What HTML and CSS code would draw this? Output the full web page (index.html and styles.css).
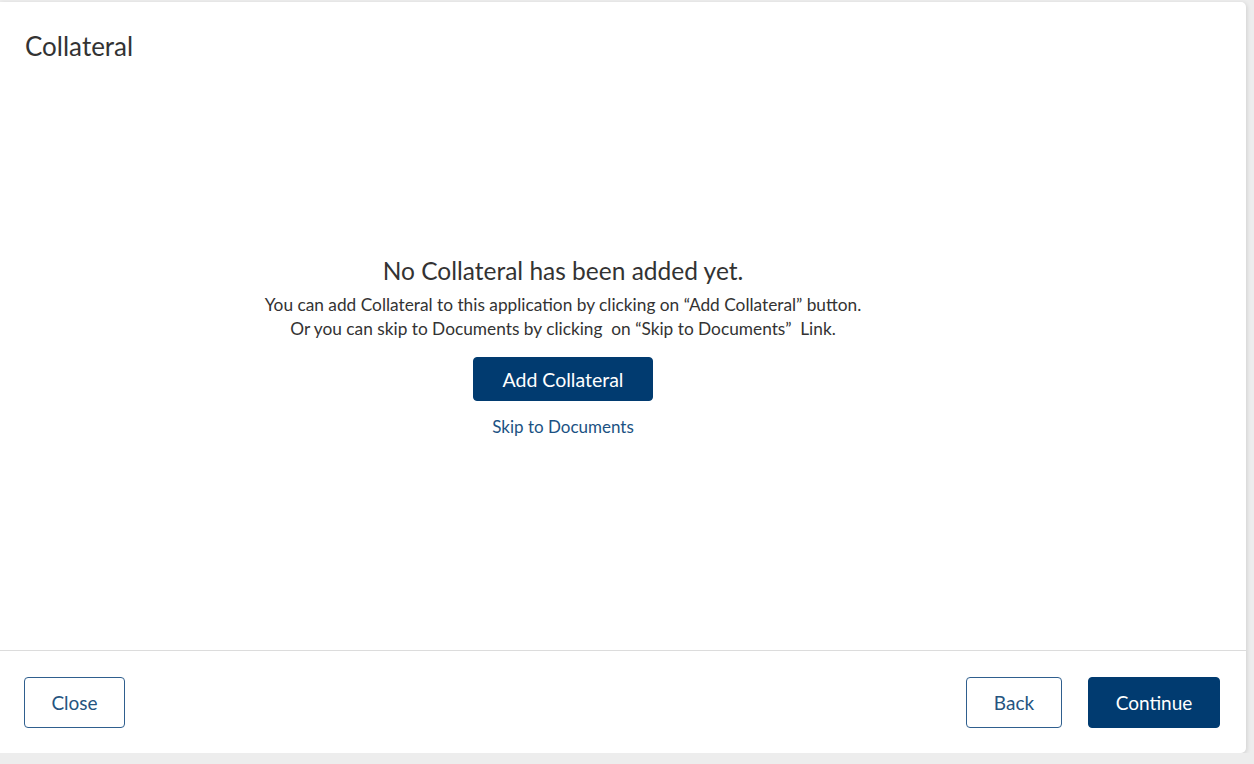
FILE: index.html
```html
<!DOCTYPE html>
<html lang="en">
<head>
    <meta charset="UTF-8">
    <meta name="viewport" content="width=device-width, initial-scale=1.0">
    <title>Collateral</title>
    <link rel="stylesheet" href="styles.css">
</head>
<body>
    <div class="card">
        <div class="card-header">
            <h1>Collateral</h1>
        </div>

        <div class="card-body">
            <div class="empty-state">
                <h2>No Collateral has been added yet.</h2>
                <p>You can add Collateral to this application by clicking on “Add Collateral” button.<br>
                Or you can skip to Documents by clicking&nbsp; on “Skip to Documents”&nbsp; Link.</p>
                <button class="btn btn-primary btn-add">Add Collateral</button>
                <a href="#" class="link">Skip to Documents</a>
            </div>
        </div>

        <div class="card-footer">
            <button class="btn btn-outline btn-close">Close</button>
            <div class="footer-right">
                <button class="btn btn-outline btn-back">Back</button>
                <button class="btn btn-primary btn-continue">Continue</button>
            </div>
        </div>
    </div>
</body>
</html>
```

FILE: styles.css
```css
body {
    font-family: Lato, "Open Sans", sans-serif;
    background-color: #ededed;
    margin: 0;
    padding: 0;
    color: #333;
}

.card {
    width: 1246px;
    height: 751px;
    margin-top: 2px;
    background-color: #fff;
    border-radius: 0 5px 5px 0;
    box-shadow: 1px 1px 4px rgba(0, 0, 0, 0.12);
    display: flex;
    flex-direction: column;
}

.card-header {
    padding: 29px 25px 0;
}

h1 {
    margin: 0;
    font-size: 26px;
    line-height: 30px;
    font-weight: 400;
    color: #333;
}

.card-body {
    flex: 1;
    display: flex;
    justify-content: center;
    padding-right: 120px;
}

.empty-state {
    margin-top: 195px;
    display: flex;
    flex-direction: column;
    align-items: center;
    text-align: center;
}

h2 {
    margin: 0 0 7px;
    font-size: 24.5px;
    line-height: 30px;
    font-weight: 400;
    color: #333;
}

p {
    margin: 0 0 16px;
    font-size: 17.3px;
    line-height: 24px;
    color: #333;
}

.link {
    margin-top: 16px;
    font-size: 17px;
    line-height: 20px;
    color: #1b5283;
    text-decoration: none;
}

.btn {
    font-family: inherit;
    font-size: 19px;
    border-radius: 4px;
    cursor: pointer;
}

.btn-primary {
    background-color: #013b70;
    border: 1px solid #013b70;
    color: #fff;
}

.btn-outline {
    background-color: #fff;
    border: 1px solid #2f5f8e;
    color: #25547f;
}

.btn-add {
    width: 180px;
    height: 44px;
    font-size: 19.5px;
}

.card-footer {
    border-top: 1px solid #dcdcdc;
    padding: 26px 26px 25px 24px;
    display: flex;
    justify-content: space-between;
}

.footer-right {
    display: flex;
    gap: 26px;
}

.btn-close {
    width: 101px;
    height: 51px;
}

.btn-back {
    width: 96px;
    height: 51px;
}

.btn-continue {
    width: 132px;
    height: 51px;
}
```
